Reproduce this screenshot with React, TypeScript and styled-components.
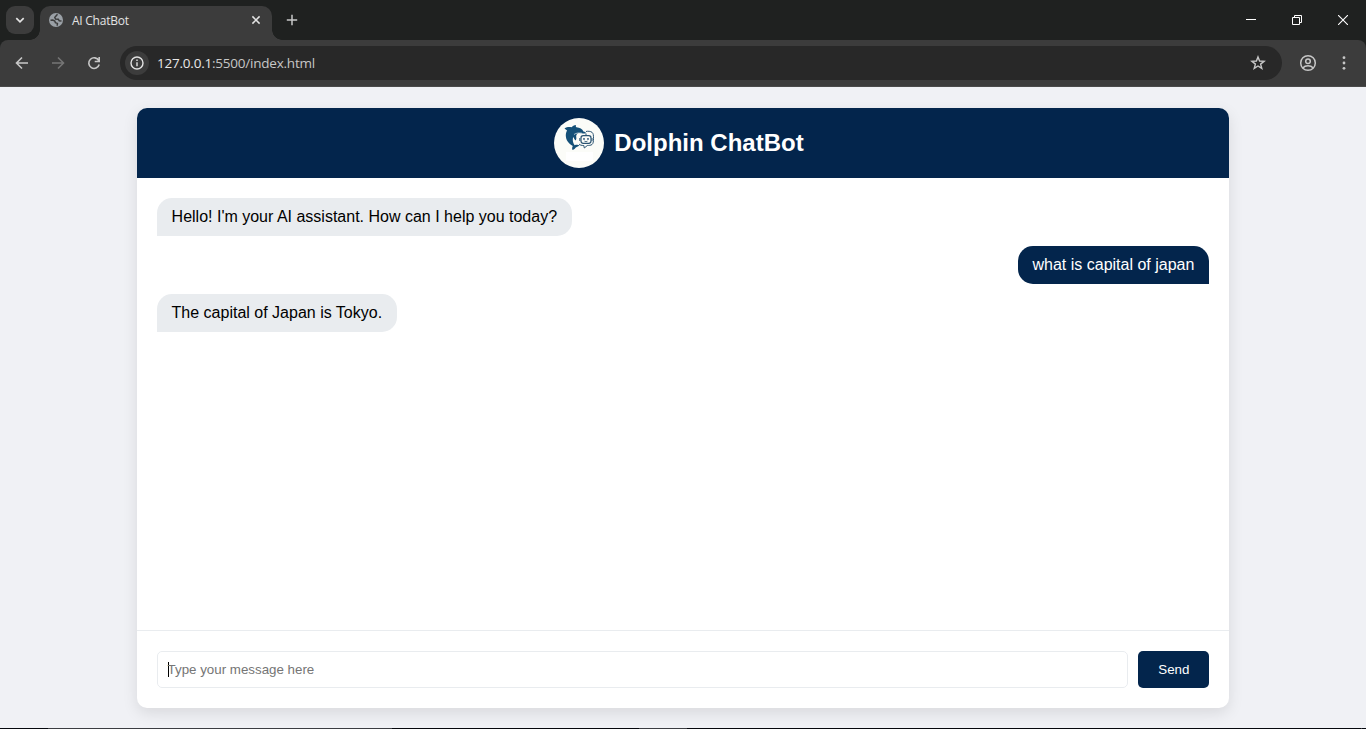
import React from 'react';
import styled, { createGlobalStyle } from 'styled-components';

const navy = '#03254c';

const GlobalStyle = createGlobalStyle`
  * { box-sizing: border-box; }
  body { margin: 0; overflow: hidden; font-family: "Liberation Sans", Arial, sans-serif; }
`;

const Window = styled.div`
  display: flex;
  flex-direction: column;
  width: 1366px;
  height: 729px;
  background: #f0f1f5;
`;

const TabStrip = styled.div`
  display: flex;
  height: 40px;
  padding-left: 6px;
  background: #1f2120;
`;

const TabSearch = styled.div`
  display: grid;
  place-items: center;
  width: 28px;
  height: 28px;
  margin: 6px 6px 0 0;
  border-radius: 9px;
  background: #3c3c3c;
`;

const Tab = styled.div`
  position: relative;
  display: flex;
  align-items: center;
  width: 232px;
  height: 34px;
  margin-top: 6px;
  padding: 0 10px 6px 9px;
  border-radius: 10px 10px 0 0;
  background: #3c3c3c;
  color: #e3e3e3;
  font: 12px/18px "Open Sans", "Noto Sans", sans-serif;

  &::before, &::after {
    content: '';
    position: absolute;
    bottom: 0;
    width: 10px;
    height: 10px;
  }
  &::before { left: -10px; background: radial-gradient(circle at 0 0, transparent 9.5px, #3c3c3c 10px); }
  &::after { right: -10px; background: radial-gradient(circle at 100% 0, transparent 9.5px, #3c3c3c 10px); }
`;

const TabTitle = styled.span`
  flex: 1;
  margin-left: 9px;
  padding-top: 1px;
  letter-spacing: -0.25px;
`;

const NewTab = styled.div`
  display: grid;
  place-items: center;
  width: 40px;
  height: 40px;
`;

const WindowControls = styled.div`
  display: flex;
  margin-left: auto;
`;

const ControlButton = styled.div`
  display: grid;
  place-items: center;
  width: 46px;
  height: 40px;
`;

const ToolbarBack = styled.div`
  background: #1f2120;
`;

const Toolbar = styled.div`
  display: flex;
  align-items: center;
  height: 47px;
  padding-left: 4px;
  border-bottom: 1px solid #4a4a4a;
  border-radius: 8px 8px 0 0;
  background: #3c3c3c;
`;

const ToolButton = styled.div`
  display: grid;
  place-items: center;
  width: 36px;
  height: 36px;
`;

const AddressBar = styled.div`
  display: flex;
  align-items: center;
  width: 1162px;
  height: 34px;
  margin: 0 8px;
  padding: 0 16px 0 5px;
  border-radius: 17px;
  background: #282828;
`;

const SiteInfo = styled.div`
  display: grid;
  place-items: center;
  width: 24px;
  height: 24px;
  border-radius: 12px;
  background: #3c3c3c;
`;

const Url = styled.span`
  flex: 1;
  margin-left: 8px;
  color: #c7c7c7;
  font: 13.5px/20px "Open Sans", "Noto Sans", sans-serif;
  letter-spacing: -0.22px;
`;

const UrlHost = styled.span`
  color: #e8e8e8;
`;

const Page = styled.main`
  flex: 1;
  padding-top: 21px;
`;

const Chat = styled.section`
  display: flex;
  flex-direction: column;
  width: 80%;
  height: 600px;
  margin: 0 auto;
  overflow: hidden;
  border-radius: 10px;
  background: #fff;
  box-shadow: 0 5px 15px rgba(0, 0, 0, 0.1);
`;

const ChatHeader = styled.header`
  display: flex;
  align-items: center;
  justify-content: center;
  height: 70px;
  padding-right: 8px;
  background: ${navy};
  color: #fff;
`;

const Title = styled.h1`
  margin: 0 0 0 10px;
  font-size: 24px;
  line-height: 28px;
`;

const Messages = styled.div`
  display: flex;
  flex: 1;
  flex-direction: column;
  gap: 10px;
  padding: 20px;
`;

const Bubble = styled.div<{ $mine?: boolean }>`
  align-self: ${p => (p.$mine ? 'flex-end' : 'flex-start')};
  height: 38px;
  padding: 10px 15px;
  border-radius: ${p => (p.$mine ? '15px 15px 0 15px' : '15px 15px 15px 0')};
  background: ${p => (p.$mine ? navy : '#e9ecef')};
  color: ${p => (p.$mine ? '#fff' : '#000')};
  font-size: 16px;
  line-height: 18px;
`;

const Composer = styled.div`
  display: flex;
  gap: 10px;
  padding: 20px;
  border-top: 1px solid #e9ecef;
`;

const Field = styled.div`
  display: flex;
  flex: 1;
  align-items: center;
  height: 37px;
  padding-left: 10px;
  border: 1px solid #e9ecef;
  border-radius: 5px;
  color: #757575;
  font-size: 13.333px;
`;

const Caret = styled.span`
  width: 1px;
  height: 15px;
  margin-right: -1px;
  background: #000;
`;

const SendButton = styled.button`
  width: 71px;
  height: 37px;
  padding: 0;
  border: 0;
  border-radius: 5px;
  background: ${navy};
  color: #fff;
  font: 13.333px "Liberation Sans", Arial, sans-serif;
`;

const TaskbarEdge = styled.div`
  display: flex;
  height: 1px;
  background: #05070d;
`;

const EdgeSegment = styled.div<{ $width: number; $lit?: boolean }>`
  width: ${p => p.$width}px;
  background: ${p => (p.$lit ? '#3b3d42' : 'transparent')};
`;

function DolphinLogo() {
  return (
    <svg width="50" height="50" viewBox="0 0 50 50">
      <circle cx="25" cy="25" r="25" fill="#fbfcf8" />
      <path fill="#fff" d="M12 34h27v9H12z" />
      <path
        fill="#145078"
        d="M10.500 10.300C13 8.800 15.500 8.600 17.500 9.300 18.500 8 20 7.200 22 7c-.4 1-.2 1.800.4 2.300 3.400.3 6 1.800 7 4.200 1.300.2 2.300.8 2.600 1.800-2.500.3-5 .2-7.200-.3-1.800.6-2.800 2-2.600 3.800.3 1.400.2 2.600-.5 3.700-1.200-1-2-2.300-2.300-3.800-1.200 2.700-.6 6 1.200 8.500 1.800-.7 3.700-.6 5 .2-1.200.8-2.500 1-3.800 2-.8.900-1.600 2-3.200 2.700-.7-1.200-.6-2.800.2-4.200-4.200-2.200-7-6-7-10.400 0-2 .5-3.600 1.300-5-.9-.5-1.900-1.300-2.600-2.200z"
      />
      <path d="M20 16.500c2.200-1.700 5-1.700 8-1.300" fill="none" stroke="#e4eeee" strokeWidth=".7" />
      <g fill="none" stroke="#2b5472" strokeWidth="1">
        <path d="M32 13.500c2-.5 4.500-.3 6 .8 1.400 1.100 1.500 3 1.500 6s-.2 5.200-1.500 6.200c-1.200 1-3.200.9-4.700 1L30.300 30l-.5-2.500c-2.200 0-3.800-.3-4.800-1.500" />
        <rect x="27" y="17.700" width="10" height="7.600" rx="2.200" strokeWidth="1.200" />
        <path d="M32 15.500v2M25.800 20v3M38 20v3M30.500 23.200c.9.500 2 .5 2.900 0" />
      </g>
      <circle cx="30" cy="20.900" r=".9" fill="#1d496c" />
      <circle cx="34" cy="20.900" r=".9" fill="#1d496c" />
    </svg>
  );
}

function BrowserChrome() {
  return (
    <>
      <TabStrip>
        <TabSearch>
          <svg width="10" height="10" viewBox="0 0 10 10" fill="none" stroke="#e3e3e3" strokeWidth="1.700">
            <path d="M1.300 3.200 5 6.800l3.700-3.600" />
          </svg>
        </TabSearch>
        <Tab>
          <svg width="14" height="14" viewBox="0 0 14 14">
            <circle cx="7" cy="7" r="7" fill="#9aa0a6" />
            <path
              fill="none"
              stroke="#3c3c3c"
              strokeWidth="1.500"
              d="M8.500 1.300 7 2.900 5.800 4.300 6.500 6l2.800.3 1 1.500 2.200.3M1.500 7.300l2.300-.2 2 .9.600 1.700 2 .7-.2 2.300"
            />
          </svg>
          <TabTitle>AI ChatBot</TabTitle>
          <svg width="12" height="12" viewBox="0 0 12 12" stroke="#e3e3e3" strokeWidth="1.500">
            <path d="m2.400 2.400 7.200 7.200m0-7.200L2.400 9.600" />
          </svg>
        </Tab>
        <NewTab>
          <svg width="12" height="12" viewBox="0 0 12 12" stroke="#c7c7c7" strokeWidth="1.500">
            <path d="M6 .8v10.400M.8 6h10.400" />
          </svg>
        </NewTab>
        <WindowControls>
          <ControlButton>
            <svg width="10" height="10" stroke="#fff"><path d="M0 4.500h10" /></svg>
          </ControlButton>
          <ControlButton>
            <svg width="10" height="10" fill="none" stroke="#fff"><path d="M.5 2.500h7v7h-7zM2.500 2.500v-2h7v7h-2" /></svg>
          </ControlButton>
          <ControlButton>
            <svg width="10" height="10" stroke="#fff" strokeWidth="1.100"><path d="m0 0 10 10m0-10L0 10" /></svg>
          </ControlButton>
        </WindowControls>
      </TabStrip>
      <ToolbarBack>
        <Toolbar>
          <ToolButton>
            <svg width="16" height="16" viewBox="0 0 16 16" fill="none" stroke="#c7c7c7" strokeWidth="1.600">
              <path d="M14 8H3M8 2.500 2.500 8 8 13.500" />
            </svg>
          </ToolButton>
          <ToolButton>
            <svg width="16" height="16" viewBox="0 0 16 16" fill="none" stroke="#757575" strokeWidth="1.600">
              <path d="M2 8h11M8 2.500 13.500 8 8 13.500" />
            </svg>
          </ToolButton>
          <ToolButton>
            <svg width="16" height="16" viewBox="0 0 16 16" fill="none" stroke="#c7c7c7" strokeWidth="1.600">
              <path d="M13.200 9.500A5.300 5.300 0 1 1 12.800 5.700L13.200 6.200M13.200 2v4.500H8.700" />
            </svg>
          </ToolButton>
          <AddressBar>
            <SiteInfo>
              <svg width="14" height="14" viewBox="0 0 14 14" fill="none" stroke="#e3e3e3" strokeWidth="1.400">
                <circle cx="7" cy="7" r="6" />
                <path d="M7 6.200v4M7 3.500v1.500" />
              </svg>
            </SiteInfo>
            <Url><UrlHost>127.0.0.1</UrlHost>:5500/index.html</Url>
            <svg width="16" height="16" viewBox="0 0 16 16" fill="none" stroke="#c7c7c7" strokeWidth="1.400">
              <path d="m8 1.900 1.600 4.100 4.500.3-3.500 2.800 1.200 4.300L8 11l-3.800 2.400 1.200-4.300L1.900 6.300 6.400 6z" />
            </svg>
          </AddressBar>
          <ToolButton>
            <svg width="18" height="18" viewBox="0 0 18 18" fill="none" stroke="#c7c7c7" strokeWidth="1.500">
              <circle cx="9" cy="9" r="7.300" />
              <circle cx="9" cy="7.200" r="2.300" />
              <path d="M3.800 14c1.300-1.500 3-2.200 5.200-2.200s3.900.7 5.200 2.200" />
            </svg>
          </ToolButton>
          <ToolButton>
            <svg width="16" height="16" viewBox="0 0 16 16" fill="#c7c7c7">
              <circle cx="8" cy="2.700" r="1.400" />
              <circle cx="8" cy="8" r="1.400" />
              <circle cx="8" cy="13.300" r="1.400" />
            </svg>
          </ToolButton>
        </Toolbar>
      </ToolbarBack>
    </>
  );
}

export default function App() {
  return (
    <Window>
      <GlobalStyle />
      <BrowserChrome />
      <Page>
        <Chat>
          <ChatHeader>
            <DolphinLogo />
            <Title>Dolphin ChatBot</Title>
          </ChatHeader>
          <Messages>
            <Bubble>Hello! I'm your AI assistant. How can I help you today?</Bubble>
            <Bubble $mine>what is capital of japan</Bubble>
            <Bubble>The capital of Japan is Tokyo.</Bubble>
          </Messages>
          <Composer>
            <Field><Caret />Type your message here</Field>
            <SendButton>Send</SendButton>
          </Composer>
        </Chat>
      </Page>
      <TaskbarEdge>
        <EdgeSegment $width={48} />
        <EdgeSegment $width={344} $lit />
        <EdgeSegment $width={247} />
        <EdgeSegment $width={48} $lit />
        <EdgeSegment $width={674} />
        <EdgeSegment $width={1} $lit />
      </TaskbarEdge>
    </Window>
  );
}
